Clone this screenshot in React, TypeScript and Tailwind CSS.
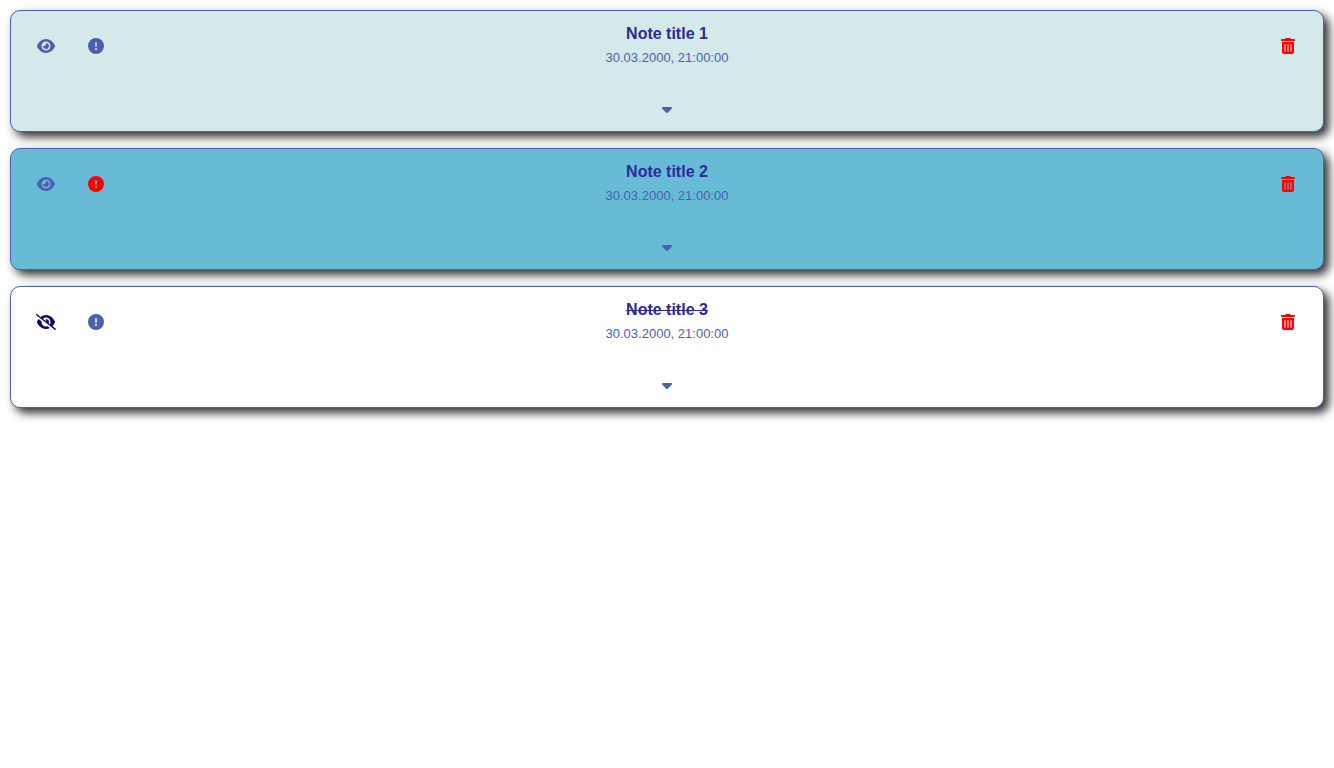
import { useState } from "react";
import { FaEye, FaEyeSlash, FaCircleExclamation, FaCaretDown, FaTrashCan } from "react-icons/fa6";

type Note = { id: number; title: string; date: string; important: boolean; done: boolean; card: string };

const initialNotes: Note[] = [
  { id: 1, title: "Note title 1", date: "30.03.2000, 21:00:00", important: false, done: false, card: "bg-[#d4e9ea]" },
  { id: 2, title: "Note title 2", date: "30.03.2000, 21:00:00", important: true, done: false, card: "bg-[#68bbd7]" },
  { id: 3, title: "Note title 3", date: "30.03.2000, 21:00:00", important: false, done: true, card: "bg-white" },
];

const iconButton = "flex size-[50px] items-center justify-center";

export default function App() {
  const [notes, setNotes] = useState(initialNotes);
  const toggle = (id: number, key: "done" | "important") =>
    setNotes(notes.map((n) => (n.id === id ? { ...n, [key]: !n[key] } : n)));

  return (
    <main className="flex min-h-screen flex-col gap-4 p-2.5 font-['Liberation_Sans',Arial,sans-serif] text-[#4a5fad]">
      {notes.map((note) => (
        <article
          key={note.id}
          className={`grid grid-cols-[100px_1fr_100px] rounded-[10px] border border-[#4a5fad] p-2.5 shadow-[5px_5px_10px_#333] ${note.card}`}
        >
          <div className="flex">
            <button aria-label="Toggle done" className={`${iconButton} ${note.done ? "text-[#0c0c68]" : ""}`} onClick={() => toggle(note.id, "done")}>
              {note.done ? <FaEyeSlash className="h-4 w-5" /> : <FaEye className="h-4 w-[18px]" />}
            </button>
            <button aria-label="Toggle important" className={`${iconButton} ${note.important ? "text-[#ff0000]" : ""}`} onClick={() => toggle(note.id, "important")}>
              <FaCircleExclamation className="size-4" />
            </button>
          </div>
          <div className="flex flex-col items-center pt-px">
            <h2 className={`text-base leading-6 font-bold text-[#2d2a96] ${note.done ? "line-through" : ""}`}>{note.title}</h2>
            <p className="text-[13px] leading-6">{note.date}</p>
            <button aria-label="Expand note" className="mt-[27px] flex h-6 w-12 items-center justify-center">
              <FaCaretDown className="h-4 w-[10px]" />
            </button>
          </div>
          <div className="flex justify-end">
            <button aria-label="Delete note" className={`${iconButton} text-[#ff0000]`} onClick={() => setNotes(notes.filter((n) => n.id !== note.id))}>
              <FaTrashCan className="h-4 w-3.5" />
            </button>
          </div>
        </article>
      ))}
    </main>
  );
}
